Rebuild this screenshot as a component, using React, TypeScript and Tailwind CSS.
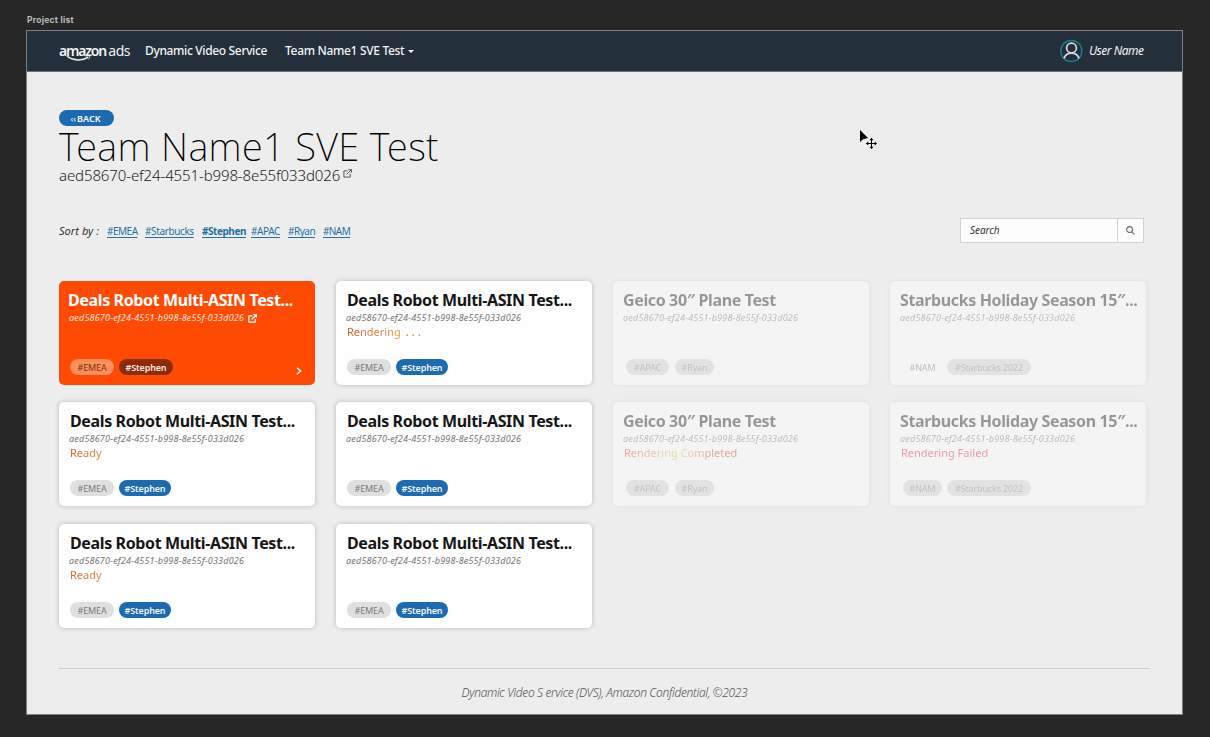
import { ReactNode } from "react";

type Tag = { label: string; box: string };
type Project = {
  title: string;
  status?: ReactNode;
  tags: Tag[];
  variant?: "active" | "disabled";
  pad: string;
};

const GREY = "bg-[#dfdfdf] text-[#7a7a7a]";
const BLUE = "bg-[#1c6bb0] text-[#f0f6fb] font-semibold";
const DIM = "bg-[#d4d4d4] text-[#808080]";

const deals = "Deals Robot Multi-ASIN Test...";
const geico = "Geico 30″ Plane Test";
const starbucks = "Starbucks Holiday Season 15″...";

const dealTags: Tag[] = [
  { label: "#EMEA", box: `w-[44px] ${GREY}` },
  { label: "#Stephen", box: `w-[52px] ${BLUE}` },
];
const geicoTags: Tag[] = [
  { label: "#APAC", box: `w-[43px] ml-[3px] mr-px ${DIM}` },
  { label: "#Ryan", box: `w-[39px] ${DIM}` },
];
const seasonTag: Tag = { label: "#Starbucks 2022", box: `w-[84px] ${DIM}` };
const ready = <span className="bg-linear-to-r from-[#dc5a2e] to-[#dd8a48] bg-clip-text text-transparent">Ready</span>;

const projects: Project[] = [
  {
    title: deals,
    variant: "active",
    pad: "pl-[9px]",
    tags: [
      { label: "#EMEA", box: "w-[44px] ml-[2px] bg-[#ff8f5c] text-[#7d3413]" },
      { label: "#Stephen", box: "w-[54px] bg-[#8c2c07] text-[#fbe9e0] font-semibold" },
    ],
  },
  {
    title: deals,
    pad: "pl-[11px]",
    status: (
      <span className="bg-linear-to-r from-[#d9572b] via-[#dd8f3c] to-[#dfa648] bg-clip-text text-transparent">
        Rendering <span className="ml-[2px] tracking-[3.2px] text-[#c99348]">...</span>
      </span>
    ),
    tags: dealTags,
  },
  { title: geico, variant: "disabled", pad: "pl-[10px]", tags: geicoTags },
  {
    title: starbucks,
    variant: "disabled",
    pad: "pl-[10px]",
    tags: [{ label: "#NAM", box: "w-[39px] ml-[3px] text-[#777777]" }, seasonTag],
  },
  { title: deals, pad: "pl-[11px]", status: ready, tags: dealTags },
  { title: deals, pad: "pl-[11px]", tags: dealTags },
  {
    title: geico,
    variant: "disabled",
    pad: "pl-[10px]",
    status: (
      <span className="ml-px bg-linear-to-r from-[#d83c18] via-[#d9cf3c] via-50% to-[#d4301c] to-75% bg-clip-text text-transparent">
        Rendering Completed
      </span>
    ),
    tags: geicoTags,
  },
  {
    title: starbucks,
    variant: "disabled",
    pad: "pl-[10px]",
    status: <span className="ml-px text-[#e81e3c]">Rendering Failed</span>,
    tags: [{ label: "#NAM", box: `w-[39px] ml-[3px] ${DIM}` }, seasonTag],
  },
  { title: deals, pad: "pl-[11px]", status: ready, tags: dealTags },
  { title: deals, pad: "pl-[11px]", tags: dealTags },
];

function ExternalIcon({ className }: { className: string }) {
  return (
    <svg viewBox="0 0 10 10" className={className} fill="none" stroke="currentColor">
      <path d="M5 2H1v7h7V5.2" />
      <path d="M4 6 9 1M6 .7h3.4V4" />
    </svg>
  );
}

function ProjectCard({ project }: { project: Project }) {
  const active = project.variant === "active";
  const disabled = project.variant === "disabled";
  const look = active
    ? "bg-[#ff4a04] text-white"
    : disabled
      ? "bg-white text-[#161616] opacity-40 shadow-[0_0_5px_rgba(0,0,0,0.16)]"
      : "bg-[#fefefe] text-[#161616] shadow-[0_0_5px_rgba(0,0,0,0.22)]";
  const idLook = active
    ? "text-[#ffe4d8]"
    : disabled
      ? "text-[#757575]"
      : "-ml-px text-[#757575]";
  return (
    <article className={`flex h-[104px] w-[256px] flex-col rounded-[5px] pt-2 pb-[10px] whitespace-nowrap ${project.pad} ${look}`}>
      <h2 className="text-[16px] leading-[22px] font-bold tracking-[-0.37px]">{project.title}</h2>
      <p className={`flex items-center gap-1 text-[9px] leading-[14px] tracking-[0.19px] italic ${active ? "pl-px" : ""} ${idLook}`}>
        aed58670-ef24-4551-b998-8e55f-033d026
        {active && <ExternalIcon className="size-[9px] stroke-[1.4] text-white" />}
      </p>
      {project.status && <p className="text-[11px] leading-[14px]">{project.status}</p>}
      <div className="mt-auto flex gap-[5px]">
        {project.tags.map((tag) => (
          <span
            key={tag.label}
            className={`flex h-4 items-center justify-center rounded-full text-[9px] leading-none tracking-[-0.15px] ${tag.box}`}
          >
            {tag.label}
          </span>
        ))}
        {active && (
          <svg viewBox="0 0 6 8" className="mt-[8px] mr-[13px] ml-auto h-[8px] w-[6px]" fill="none" stroke="white" strokeWidth="1.5">
            <path d="m1 .7 3.6 3.3L1 7.3" />
          </svg>
        )}
      </div>
    </article>
  );
}

const sortTags: [string, string][] = [
  ["#EMEA", "w-[38px] tracking-[-0.5px]"],
  ["#Starbucks", "w-[57px] tracking-[-0.38px]"],
  ["#Stephen", "w-[49px] font-bold tracking-[-0.45px]"],
  ["#APAC", "w-[37px] tracking-[-0.4px]"],
  ["#Ryan", "w-[35px] tracking-[-0.5px]"],
  ["#NAM", "w-[30px] tracking-[-0.6px]"],
];

export default function App() {
  return (
    <div className="relative h-[737px] w-[1210px] overflow-hidden bg-[#272727] pl-[26px] font-['Noto_Sans','Open_Sans',sans-serif]">
      <div className="flex h-[30px] items-end pb-[3px] pl-px font-['Inter',sans-serif] text-[8.5px] leading-[13px] font-bold tracking-[0.25px] text-[#bcbcbc]">
        Project list
      </div>
      <div className="flex h-[685px] w-[1157px] flex-col border border-[#7c8084] bg-[#ededed]">
        <header className="flex h-[41px] shrink-0 items-center border-b border-[#6d7378] bg-[#232f3a] pr-[38px] pl-8 text-[12px] font-medium whitespace-nowrap text-[#f2f4f5]">
          <div className="relative flex w-[71px] items-baseline justify-between text-[14px] leading-[18px]">
            <span className="font-semibold tracking-[-1.2px]">amazon</span>
            <span className="font-normal tracking-[-0.5px]">ads</span>
            <svg viewBox="0 0 26 8" className="absolute top-[12px] left-[7px] h-[8px] w-[26px]" fill="none" stroke="currentColor">
              <path d="M1 2.2C7 6.8 16 7.2 22 3.4" strokeWidth="1.4" />
              <path d="M19.8 2.2c2-.6 4-.6 4 0s-.4 2-1.4 3.2" strokeWidth="1" />
            </svg>
          </div>
          <span className="ml-[15px] w-[122px] tracking-[-0.35px]">Dynamic Video Service</span>
          <span className="ml-[18px] w-[119px] tracking-[-0.33px]">Team Name1 SVE Test</span>
          <svg viewBox="0 0 6 3" className="ml-[4px] h-[3px] w-[6px]" fill="currentColor">
            <path d="M0 0h6L3 3z" />
          </svg>
          <div className="ml-auto flex items-center gap-[6px]">
            <svg viewBox="0 0 24 24" className="size-[24px]" fill="none">
              <circle cx="12.3" cy="12" r="10.5" stroke="#14808f" strokeWidth="1.5" />
              <circle cx="12.5" cy="9" r="4.9" stroke="#d5dade" strokeWidth="1.7" />
              <path d="M5 19.5c1-3.5 3.6-5.4 7.5-5.4s6.5 1.9 7.5 5.4" stroke="#d5dade" strokeWidth="1.7" />
            </svg>
            <span className="w-[55px] font-normal tracking-[-0.5px] italic">User Name</span>
          </div>
        </header>

        <main className="flex flex-1 flex-col pr-8 pl-8">
          <button className="mt-[38px] flex h-4 w-[55px] items-center justify-center rounded-full bg-[#1c6bb0] pr-[2px] text-[9px] leading-none font-semibold text-white">
            <span className="mr-px font-normal">‹‹</span>BACK
          </button>
          <h1 className="h-[40px] text-[38px] leading-[40px] font-extralight tracking-[0.35px] whitespace-nowrap text-black">
            Team Name1 SVE Test
          </h1>
          <p className="flex h-[18px] items-center gap-[3px] text-[15px] leading-[17px] font-light tracking-[-0.12px] text-[#222222]">
            aed58670-ef24-4551-b998-8e55f033d026
            <ExternalIcon className="-mt-1 size-[9px] stroke-[0.8]" />
          </p>

          <div className="mt-[34px] flex h-[25px] items-center text-[10px] whitespace-nowrap">
            <span className="w-[48px] pt-[2px] text-[11px] tracking-[0.05px] text-[#333333] italic">Sort by :</span>
            {sortTags.map(([label, box]) => (
              <a key={label} className={`pt-[2px] text-[#22719f] underline underline-offset-2 ${box}`}>
                {label}
              </a>
            ))}
            <div className="mr-[6px] ml-auto flex h-[25px] w-[184px] border border-[#d2d2d2] bg-[#fdfdfd]">
              <span className="flex flex-1 items-center pl-[9px] tracking-[-0.05px] text-[#333333] italic">Search</span>
              <span className="flex w-[26px] items-center justify-center border-l border-[#d2d2d2]">
                <svg viewBox="0 0 10 10" className="size-[9px]" fill="none" stroke="#666666" strokeWidth="1.2">
                  <circle cx="4" cy="4" r="3.3" />
                  <path d="m6.4 6.4 3 3" />
                </svg>
              </span>
            </div>
          </div>

          <section className="mt-[38px] grid w-[1087px] grid-cols-4 grid-rows-[121px_122px_104px] items-start gap-x-[21px]">
            {projects.map((project, i) => (
              <ProjectCard key={i} project={project} />
            ))}
          </section>

          <footer className="mt-10 flex justify-center border-t border-[#cccccc] pt-[15px] text-[12px] leading-[18px] font-light tracking-[-0.36px] text-[#555555] italic">
            Dynamic Video S ervice (DVS), Amazon Confidential, ©2023
          </footer>
        </main>
      </div>

      <svg viewBox="0 0 20 20" className="absolute top-[129px] left-[859px] size-[20px]">
        <path d="M1 1v12l3-2.8L9 9z" fill="#000" />
        <path d="M12.5 9.5v10M7.5 14.5h10" stroke="#000" strokeWidth="1" />
        <path d="m12.5 8.8 2 2.4h-4zM12.5 20l2-2.3h-4zM7 14.5l2.3-2v4zM18 14.5l-2.3-2v4z" fill="#000" />
      </svg>
    </div>
  );
}
